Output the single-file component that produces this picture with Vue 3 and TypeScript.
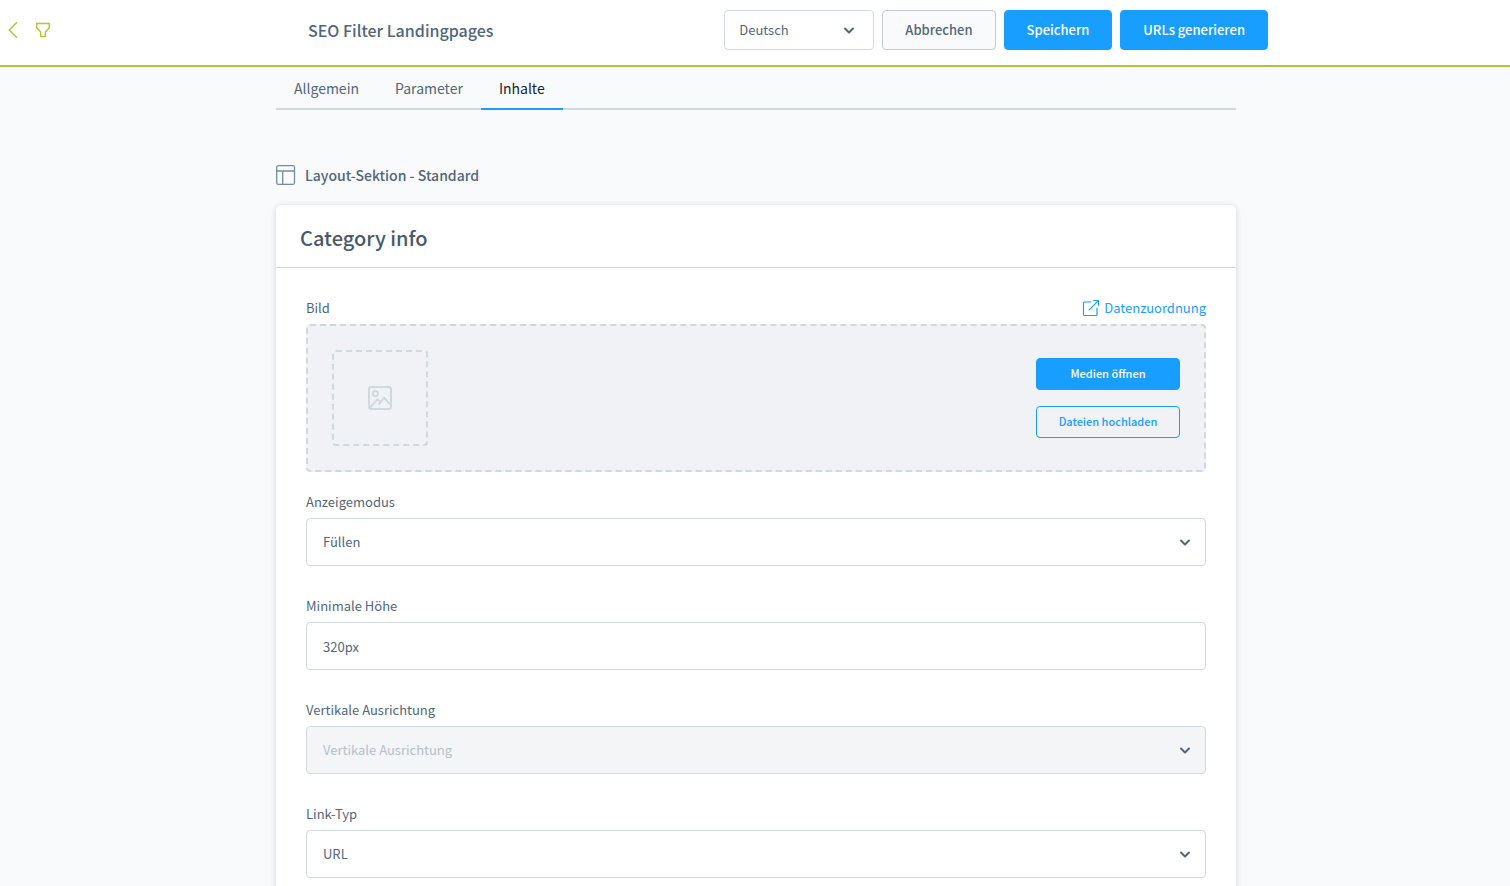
<script setup lang="ts">
import { ref } from 'vue'

interface FormField {
  id: string
  label: string
  kind: 'select' | 'text'
  value: string
  disabled?: boolean
}

const language = ref('Deutsch')
const activeTab = ref('Inhalte')
const tabs: string[] = ['Allgemein', 'Parameter', 'Inhalte']

const fields = ref<FormField[]>([
  { id: 'display-mode', label: 'Anzeigemodus', kind: 'select', value: 'Füllen' },
  { id: 'min-height', label: 'Minimale Höhe', kind: 'text', value: '320px' },
  { id: 'vertical-align', label: 'Vertikale Ausrichtung', kind: 'select', value: 'Vertikale Ausrichtung', disabled: true },
  { id: 'link-type', label: 'Link-Typ', kind: 'select', value: 'URL' },
])
</script>

<template>
  <div class="page">
    <header class="topbar">
      <nav class="topbar-nav">
        <button type="button" class="icon-button" aria-label="Zurück">
          <svg width="10" height="18" viewBox="0 0 10 18" fill="none" stroke="currentColor" stroke-width="1.4">
            <path d="M9 1.2 1.2 9 9 16.8" />
          </svg>
        </button>
        <svg class="funnel" width="16" height="16" viewBox="0 0 16 16" fill="none" stroke="currentColor" stroke-width="1.4" stroke-linejoin="round">
          <path d="M1.7 1.5h12.6v4.2L10.4 10v4.5H5.6V10L1.7 5.7z" />
        </svg>
      </nav>
      <div class="topbar-inner">
        <h1>SEO Filter Landingpages</h1>
        <div class="actions">
          <div class="select-wrap language">
            <select v-model="language" aria-label="Sprache">
              <option>Deutsch</option>
            </select>
            <svg class="chevron" width="12" height="8" viewBox="0 0 12 8" fill="none" stroke="currentColor" stroke-width="2" stroke-linecap="round" stroke-linejoin="round">
              <path d="M2 2.5l4 4 4-4" />
            </svg>
          </div>
          <button type="button" class="button">Abbrechen</button>
          <button type="button" class="button primary">Speichern</button>
          <button type="button" class="button primary">URLs generieren</button>
        </div>
      </div>
    </header>

    <main class="content">
      <div class="column">
        <div class="tabs" role="tablist">
          <button
            v-for="tab in tabs"
            :key="tab"
            type="button"
            role="tab"
            class="tab"
            :class="{ active: tab === activeTab }"
            :aria-selected="tab === activeTab"
            @click="activeTab = tab"
          >
            {{ tab }}
          </button>
        </div>

        <div class="section-title">
          <svg width="20" height="20" viewBox="0 0 20 20" fill="none" stroke="currentColor" stroke-width="1.3">
            <rect x="0.7" y="0.7" width="17.8" height="18.6" rx="1.5" />
            <path d="M1 6h17.5M6.7 6v13" />
          </svg>
          <h2>Layout-Sektion - Standard</h2>
        </div>

        <section class="card">
          <h3>Category info</h3>
          <div class="card-body">
            <div class="media-head">
              <span class="label">Bild</span>
              <a href="#" class="mapping">
                <svg width="18" height="18" viewBox="0 0 18 18" fill="none" stroke="currentColor" stroke-width="1.2" stroke-linecap="round" stroke-linejoin="round">
                  <path d="M8.8 3H2.6Q1.5 3 1.5 4.1v11.3q0 1.1 1.1 1.1h11.3q1.1 0 1.1-1.1V9.2M7.2 10.8 16.4 1.6M11.6 1.5h4.9v4.9" />
                </svg>
                Datenzuordnung
              </a>
            </div>
            <div class="media">
              <div class="preview">
                <svg width="24" height="24" viewBox="0 0 24 24" fill="none" stroke="currentColor" stroke-width="2" stroke-linejoin="round">
                  <rect x="1" y="1" width="22" height="22" rx="2" />
                  <circle cx="7.5" cy="7.5" r="2.7" stroke-width="1.8" />
                  <path d="M1.8 22 9.5 13.2l3.2 3.3M10.6 18.4 16 11.8l7 7.4" />
                </svg>
              </div>
              <div class="media-actions">
                <button type="button" class="button small primary">Medien öffnen</button>
                <button type="button" class="button small outline">Dateien hochladen</button>
              </div>
            </div>

            <div v-for="field in fields" :key="field.id" class="field">
              <label class="label" :for="field.id">{{ field.label }}</label>
              <div v-if="field.kind === 'select'" class="select-wrap">
                <select :id="field.id" v-model="field.value" :disabled="field.disabled">
                  <option>{{ field.value }}</option>
                </select>
                <svg class="chevron" width="12" height="8" viewBox="0 0 12 8" fill="none" stroke="currentColor" stroke-width="2" stroke-linecap="round" stroke-linejoin="round">
                  <path d="M2 2.5l4 4 4-4" />
                </svg>
              </div>
              <input v-else :id="field.id" v-model="field.value" type="text" />
            </div>
          </div>
        </section>
      </div>
    </main>
  </div>
</template>

<style>
html {
  scrollbar-width: none;
}
body {
  background: #f9fafb;
}
</style>

<style scoped>
.page,
.page * {
  box-sizing: border-box;
}
.page {
  color: #52667a;
  font-family: "Noto Sans CJK SC", "Noto Sans", sans-serif;
  font-size: 13px;
  line-height: 20px;
}
button,
select,
input {
  font: inherit;
  color: inherit;
}
h1,
h2,
h3 {
  margin: 0;
  font-weight: 500;
}
.topbar {
  position: sticky;
  top: 0;
  z-index: 1;
  display: grid;
  grid-template-columns: 66px minmax(0, 1fr);
  padding: 10px 0 15px;
  background: #fff;
  border-bottom: 2px solid #afc436;
}
.topbar-nav {
  display: flex;
  align-items: center;
  gap: 17px;
  padding-left: 8px;
  color: #afc436;
}
.icon-button {
  display: flex;
  padding: 0;
  border: 0;
  background: none;
}
.topbar-inner {
  display: flex;
  align-items: center;
  justify-content: space-between;
  width: 100%;
  max-width: 960px;
  margin: 0 auto;
}
h1 {
  font-size: 16px;
  line-height: 24px;
}
.actions {
  display: flex;
  gap: 8px;
}
.button {
  height: 40px;
  padding: 0 22px;
  border: 1px solid #c2ccd6;
  border-radius: 4px;
  background: #f9fafb;
  font-weight: 500;
  white-space: nowrap;
}
.primary {
  border-color: #189eff;
  background: #189eff;
  color: #fff;
}
.outline {
  border-color: #189eff;
  background: transparent;
  color: #189eff;
}
.small {
  width: 144px;
  height: 32px;
  padding: 0 0 2px;
  font-size: 11px;
}
.select-wrap {
  display: grid;
  align-items: center;
}
.select-wrap > * {
  grid-area: 1 / 1;
}
.chevron {
  justify-self: end;
  margin-right: 15px;
  pointer-events: none;
}
select,
input {
  width: 100%;
  height: 48px;
  padding: 0 16px;
  border: 1px solid #d1d9e0;
  border-radius: 4px;
  background: #fff;
  appearance: none;
}
select:disabled {
  background: #f4f5f7;
  color: #b3bfcc;
  opacity: 1;
}
.language {
  width: 150px;
}
.language select {
  height: 40px;
  padding: 0 14px;
}
.language .chevron {
  margin-right: 19px;
}
.content {
  padding-left: 2px;
}
.column {
  max-width: 960px;
  margin: 0 auto;
}
.tabs {
  display: flex;
  border-bottom: 2px solid #d1d9e0;
}
.tab {
  height: 43px;
  margin-bottom: -2px;
  padding: 0 18px;
  border: 0;
  border-bottom: 2px solid transparent;
  background: none;
  font-size: 14px;
}
.tab.active {
  border-color: #189eff;
  color: #142432;
}
.section-title {
  display: flex;
  align-items: center;
  gap: 9px;
  margin: 55px 0 20px;
  color: #758ca3;
}
h2 {
  color: #52667a;
  font-size: 14px;
}
.card {
  border-radius: 6px;
  background: #fff;
  box-shadow: 0 1px 6px rgba(0, 0, 0, 0.16);
}
h3 {
  padding: 21px 24px 17px;
  border-bottom: 1px solid #d1d9e0;
  font-size: 20px;
  line-height: 24px;
  color: #475a6d;
}
.card-body {
  padding: 30px 30px 1px;
}
.label {
  display: block;
  margin-bottom: 6px;
}
.media-head {
  display: flex;
  justify-content: space-between;
}
.mapping {
  display: flex;
  align-items: center;
  gap: 4px;
  height: 20px;
  color: #189eff;
  text-decoration: none;
}
.media {
  display: flex;
  align-items: center;
  justify-content: space-between;
  margin-bottom: 20px;
  padding: 24px;
  border: 2px dashed #d1d9e0;
  border-radius: 4px;
  background: #f0f2f5;
}
.preview {
  display: grid;
  place-items: center;
  width: 96px;
  height: 96px;
  border: 2px dashed #d1d9e0;
  border-radius: 4px;
  color: #d1d9e0;
}
.media-actions {
  display: grid;
  gap: 16px;
}
.field {
  margin-bottom: 30px;
}
</style>
